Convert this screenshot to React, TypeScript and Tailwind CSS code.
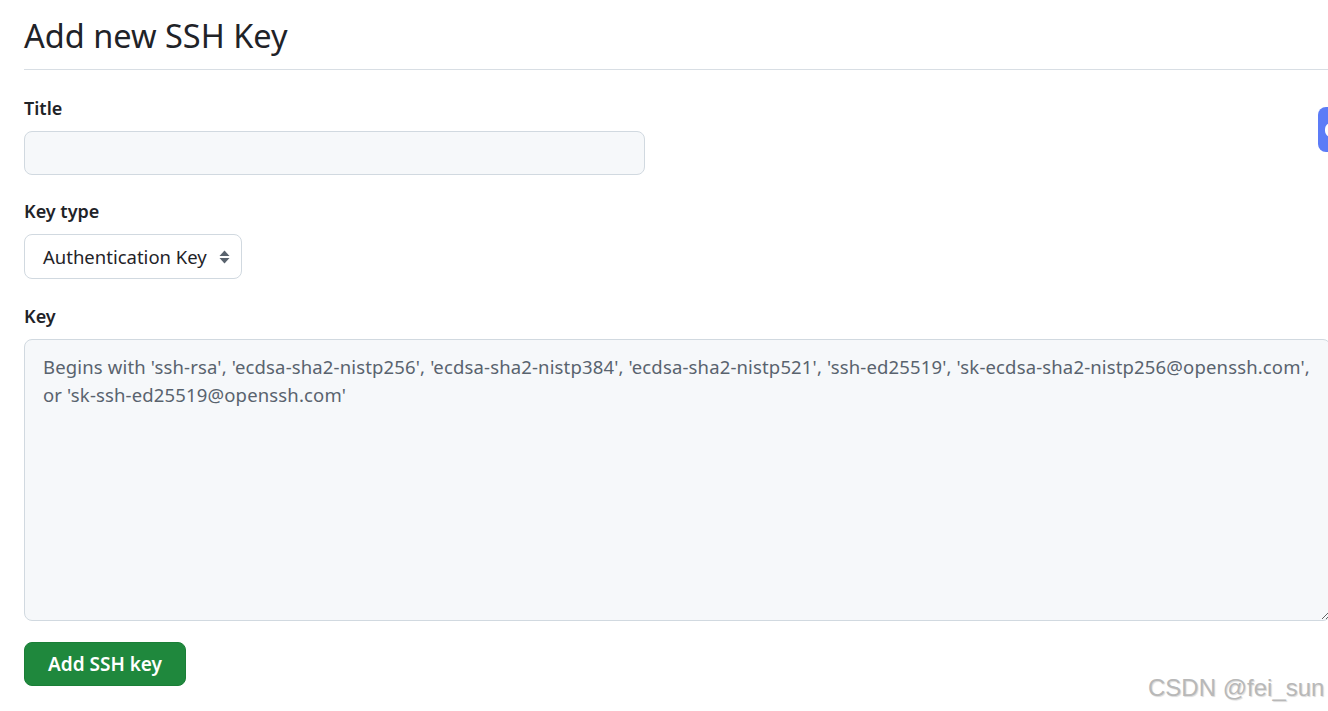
import React from "react";

export default function App() {
  return (
    <div className="relative w-[1328px] h-[711px] overflow-hidden bg-white text-[#1f2328]" style={{ fontFamily: '"Noto Sans", "Open Sans", sans-serif' }}>
      <div className="pl-6 pt-[15px]">
        <div className="border-b border-[#d8dee4] w-[1400px] pb-[12px]">
          <h1 className="text-[32.5px] leading-[42px] font-normal">Add new SSH Key</h1>
        </div>
        <form className="flex flex-col">
          <label className="mt-[24px] text-[18px] leading-[28px] font-semibold">Title</label>
          <input
            type="text"
            className="mt-[9px] w-[621px] h-[44px] rounded-[8px] border border-[#d1d9e0] bg-[#f6f8fa] px-3 text-[18px] outline-none"
          />
          <label className="mt-[22px] text-[18px] leading-[28px] font-semibold">Key type</label>
          <div className="mt-[9px] flex items-center w-[218px] h-[45px] rounded-[8px] border border-[#d1d9e0] bg-white pl-[18px] pr-[11px] justify-between">
            <span className="text-[18.5px] leading-[24px]">Authentication Key</span>
            <svg width="11" height="16" viewBox="0 0 11 16">
              <path d="M5.5 1.5 L10.5 7 H0.5 Z" fill="#59636e" />
              <path d="M5.5 14.5 L10.5 9 H0.5 Z" fill="#59636e" />
            </svg>
          </div>
          <label className="mt-[23px] text-[18px] leading-[28px] font-semibold">Key</label>
          <textarea
            className="mt-[9px] w-[1307px] h-[282px] rounded-[8px] border border-[#d1d9e0] bg-[#f6f8fa] px-[18px] py-[13px] text-[18.5px] tracking-[0.15px] leading-[28px] outline-none placeholder:text-[#59636e]"
            placeholder="Begins with 'ssh-rsa', 'ecdsa-sha2-nistp256', 'ecdsa-sha2-nistp384', 'ecdsa-sha2-nistp521', 'ssh-ed25519', 'sk-ecdsa-sha2-nistp256@openssh.com', or 'sk-ssh-ed25519@openssh.com'"
          />
          <div className="mt-[21px]">
            <button
              type="button"
              className="w-[162px] h-[44px] rounded-[8px] bg-[#1f883d] text-white text-[19px] font-semibold border border-[#1a7f37]"
            >
              Add SSH key
            </button>
          </div>
        </form>
      </div>
      <div className="absolute left-[1318px] top-[107px] w-[40px] h-[45px] rounded-[8px] bg-[#5c7cf7] flex items-center pl-[7px]">
        <div className="w-[12px] h-[14px] rounded-full border-[3px] border-white" />
      </div>
      <div
        className="absolute left-[1148px] top-[673px] text-[24px] leading-[30px] text-[#b8b8b8]"
        style={{ fontFamily: '"Liberation Sans", Arial, sans-serif', textShadow: "1px 1px 1px rgba(0,0,0,0.15)" }}
      >
        CSDN @fei_sun
      </div>
    </div>
  );
}
